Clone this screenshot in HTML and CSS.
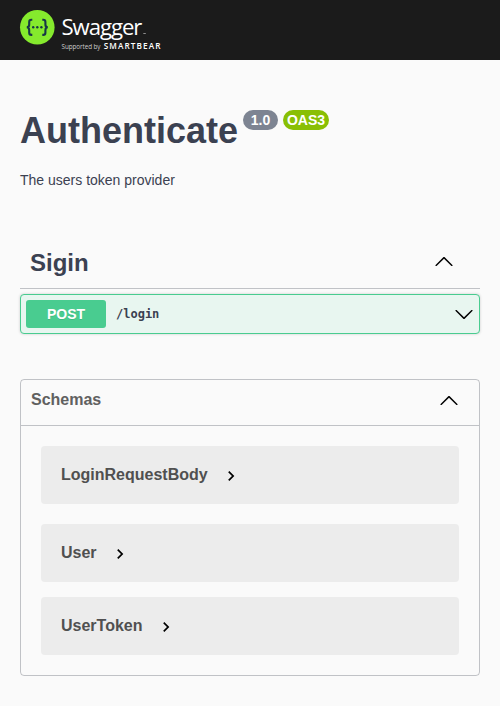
FILE: index.html
```html
<!DOCTYPE html>
<html lang="en">
<head>
<meta charset="utf-8">
<title>Authenticate</title>
<link rel="stylesheet" href="styles.css">
</head>
<body>
<header class="topbar">
  <svg class="logo" width="142" height="40" viewBox="0 0 142 40" role="img" aria-label="Swagger">
    <circle cx="17.3" cy="17.3" r="17.3" fill="#85ea2d"/>
    <g fill="none" stroke="#173647" stroke-width="2.1">
      <path d="M12.3 9.7h-.9c-1.6 0-2.2.8-2.2 2.2v2.5c0 1.7-.6 2.8-2.4 2.9 1.8.1 2.4 1.2 2.4 2.9v2.5c0 1.4.6 2.2 2.2 2.2h.9"/>
      <path d="M22.3 9.7h.9c1.6 0 2.2.8 2.2 2.2v2.5c0 1.7.6 2.8 2.4 2.9-1.8.1-2.4 1.2-2.4 2.9v2.5c0 1.4-.6 2.2-2.2 2.2h-.9"/>
    </g>
    <g fill="#173647"><circle cx="13.2" cy="17.3" r="1.2"/><circle cx="17.3" cy="17.3" r="1.2"/><circle cx="21.4" cy="17.3" r="1.2"/></g>
    <text class="logo-name" x="41.4" y="25" textLength="81">Swagger</text>
    <path d="M123.3 23.5h2.5" stroke="#aaa" stroke-width=".8"/>
    <text class="logo-by" x="41.5" y="39" textLength="39">Supported by</text>
    <text class="logo-owner" x="83.7" y="39" textLength="56.8">SMARTBEAR</text>
  </svg>
</header>
<main class="page">
  <section class="info">
    <h1 class="title">Authenticate<span class="badges"><span class="badge">1.0</span><span class="badge badge-oas">OAS3</span></span></h1>
    <p class="description">The users token provider</p>
  </section>
  <section class="tag">
    <div class="tag-head">
      <h2 class="tag-name">Sigin</h2>
      <svg class="arrow" viewBox="0 0 20 20"><path d="M17.418 14.908c.272.268.709.268.979 0s.271-.701 0-.969l-7.908-7.83c-.27-.268-.707-.268-.979 0l-7.908 7.83c-.27.268-.27.701 0 .969.271.268.709.268.979 0L10 7.767l7.418 7.141z"/></svg>
    </div>
    <div class="operation">
      <span class="method">POST</span>
      <span class="path">/login</span>
      <svg class="arrow" viewBox="0 0 20 20"><path d="M17.418 6.109c.272-.268.709-.268.979 0s.271.701 0 .969l-7.908 7.83c-.27.268-.707.268-.979 0l-7.908-7.83c-.27-.268-.27-.701 0-.969.271-.268.709-.268.979 0L10 13.25l7.418-7.141z"/></svg>
    </div>
  </section>
  <section class="models">
    <div class="models-head">
      <h3 class="models-title">Schemas</h3>
      <svg class="arrow" viewBox="0 0 20 20"><path d="M17.418 14.908c.272.268.709.268.979 0s.271-.701 0-.969l-7.908-7.83c-.27-.268-.707-.268-.979 0l-7.908 7.83c-.27.268-.27.701 0 .969.271.268.709.268.979 0L10 7.767l7.418 7.141z"/></svg>
    </div>
    <div class="models-list">
      <div class="model model-first">LoginRequestBody<svg class="toggle" viewBox="0 0 24 24"><path d="M10 6L8.59 7.41 13.17 12l-4.58 4.59L10 18l6-6z"/></svg></div>
      <div class="model">User<svg class="toggle" viewBox="0 0 24 24"><path d="M10 6L8.59 7.41 13.17 12l-4.58 4.59L10 18l6-6z"/></svg></div>
      <div class="model">UserToken<svg class="toggle" viewBox="0 0 24 24"><path d="M10 6L8.59 7.41 13.17 12l-4.58 4.59L10 18l6-6z"/></svg></div>
    </div>
  </section>
</main>
</body>
</html>
```
FILE: styles.css
```css
* { box-sizing: border-box; }
body {
  margin: 0;
  background: #fafafa;
  color: #3b4151;
  font-family: "Liberation Sans", Arial, sans-serif;
}
h1, h2, h3, p { margin: 0; }
.topbar {
  height: 60px;
  padding: 10px 20px;
  background: #1b1b1b;
}
.logo { display: block; overflow: visible; }
.logo text { font-family: "Open Sans", "Noto Sans", sans-serif; fill: #fff; }
.logo .logo-name { font-size: 22.2px; }
.logo .logo-by { font-size: 6.3px; fill: #ccc; }
.logo .logo-owner { font-size: 8.2px; font-weight: 600; }
.page { padding: 50px 20px 30px; }
.info { height: 127px; }
.title {
  display: flex;
  align-items: flex-start;
  font-size: 36px;
  line-height: 41px;
}
.badges { display: flex; gap: 5px; margin-left: 5px; }
.badge {
  width: 35px;
  height: 20px;
  border-radius: 20px;
  background: #7d8492;
  color: #fff;
  font-size: 14px;
  line-height: 20px;
  text-align: center;
}
.badge-oas { width: 46px; background: #89bf04; }
.description { margin-top: 21px; font-size: 14px; line-height: 16px; }
.tag-head {
  display: flex;
  align-items: center;
  justify-content: space-between;
  height: 52px;
  padding: 0 26px 0 10px;
  border-bottom: 1px solid rgba(59, 65, 81, .3);
}
.tag-name { font-size: 24px; line-height: 28px; }
.arrow { width: 20px; height: 20px; flex: none; }
.tag-head .arrow { margin-top: -3px; }
.operation {
  display: flex;
  align-items: center;
  height: 40px;
  margin-top: 5px;
  padding: 0 5px;
  border: 1px solid #49cc90;
  border-radius: 4px;
  background: #e8f6f0;
  box-shadow: 0 0 3px rgba(0, 0, 0, .19);
}
.method {
  width: 80px;
  height: 28px;
  border-radius: 3px;
  background: #49cc90;
  color: #fff;
  font-size: 14px;
  font-weight: 700;
  line-height: 28px;
  text-align: center;
  text-shadow: 0 1px 0 rgba(0, 0, 0, .1);
}
.path {
  flex: 1;
  padding-left: 10px;
  font: 700 12px/16px "DejaVu Sans Mono", monospace;
}
.models {
  margin-top: 45px;
  border: 1px solid rgba(59, 65, 81, .3);
  border-radius: 4px;
}
.models-head {
  display: flex;
  justify-content: space-between;
  height: 46px;
  padding: 10px 20px 0 10px;
  border-bottom: 1px solid rgba(59, 65, 81, .3);
  color: #606060;
}
.models-title { font-size: 16px; line-height: 20px; }
.models-list { padding: 20px; }
.model {
  display: flex;
  align-items: center;
  height: 58px;
  padding: 0 20px;
  margin-bottom: 15px;
  border-radius: 4px;
  background: #ececec;
  color: #505050;
  font-size: 16px;
  font-weight: 700;
}
.model-first { margin-bottom: 20px; }
.model:last-child { margin-bottom: 0; }
.toggle { width: 20px; height: 20px; margin: 2px 0 0 13px; }
```
